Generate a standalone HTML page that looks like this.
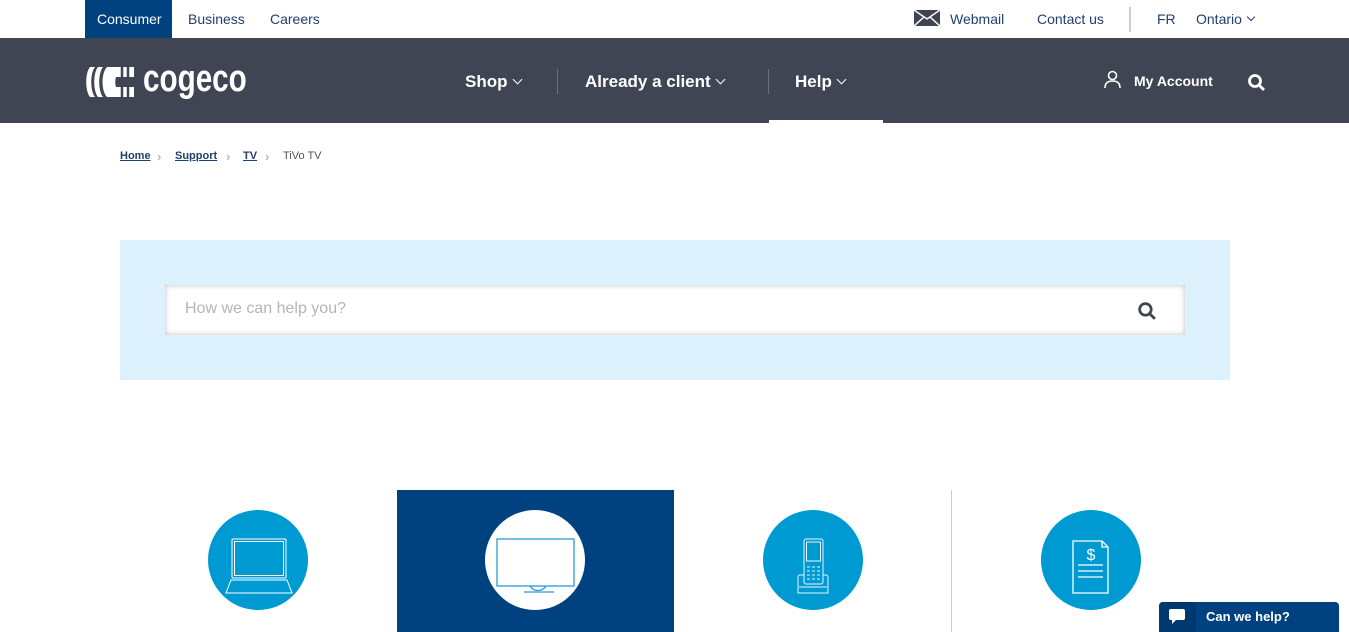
<!DOCTYPE html>
<html><head><meta charset="utf-8">
<style>
*{margin:0;padding:0;box-sizing:border-box}
body{width:1349px;height:632px;overflow:hidden;background:#fff;font-family:"Liberation Sans",sans-serif;position:relative}
.a{position:absolute}
.top{height:38px;font-size:14px;color:#1f3f6e}
.nav{top:38px;left:0;width:1349px;height:85px;background:#404553}
.nl{color:#fff;font-weight:bold;font-size:17px;top:72px}
.chev{display:inline-block;width:7px;height:7px;border-right:1.5px solid currentColor;border-bottom:1.5px solid currentColor;transform:rotate(45deg);margin-left:6px;position:relative;top:-4px}
.circ{width:100px;height:100px;border-radius:50%;background:#009ad3;top:510px}
.bc{top:150px;font-size:11px}
.bc a{color:#1f3f6e;font-weight:bold;text-decoration:underline}
.sep{top:149px;font-size:13px;color:#bbb;font-weight:bold}
</style></head><body>
<div class="a" style="left:85px;top:0;width:87px;height:38px;background:#00427f"></div>
<div class="a top" style="left:97px;top:11px;color:#fff">Consumer</div>
<div class="a top" style="left:188px;top:11px">Business</div>
<div class="a top" style="left:270px;top:11px">Careers</div>
<svg class="a" style="left:914px;top:10px" width="26" height="16" viewBox="0 0 26 16"><rect width="26" height="16" fill="#404553"/><path d="M0 0L13 9L26 0M0 16L10 7M26 16L16 7" stroke="#fff" stroke-width="1.5" fill="none"/></svg>
<div class="a top" style="left:950px;top:11px">Webmail</div>
<div class="a top" style="left:1037px;top:11px">Contact us</div>
<div class="a" style="left:1129px;top:7px;width:2px;height:25px;background:#ccc"></div>
<div class="a top" style="left:1157px;top:11px">FR</div>
<div class="a top" style="left:1196px;top:11px">Ontario<span class="chev" style="width:6px;height:6px;border-width:1.3px"></span></div>
<div class="a nav"></div>
<svg class="a" style="left:86px;top:67px" width="48" height="30" viewBox="0 0 48 30"><g fill="#fff"><path d="M4 0h5C4 6 4 24 9 30H4C-1 24-1 6 4 0z"/><path d="M12 0h5C12 6 12 24 17 30H12C7 24 7 6 12 0z"/><path d="M21 0h27v10H30c-1 3-1 7 0 10h18v10H21C15 24 15 6 21 0z"/></g><path d="M36 0v10M42 0v10M36 20v10M42 20v10" stroke="#404553" stroke-width="2.5"/></svg>
<div class="a" style="left:143px;top:58px;color:#fff;font-weight:bold;font-size:38px;letter-spacing:0px;transform:scaleX(0.78);transform-origin:left">cogeco</div>
<div class="a nl" style="left:465px">Shop<span class="chev"></span></div>
<div class="a" style="left:557px;top:69px;width:1px;height:25px;background:#6b7080"></div>
<div class="a nl" style="left:585px">Already a client<span class="chev"></span></div>
<div class="a" style="left:768px;top:69px;width:1px;height:25px;background:#6b7080"></div>
<div class="a nl" style="left:795px">Help<span class="chev"></span></div>
<div class="a" style="left:769px;top:120px;width:114px;height:3px;background:#fff"></div>
<svg class="a" style="left:1103px;top:70px" width="19" height="19" viewBox="0 0 19 19" fill="none" stroke="#fff" stroke-width="1.6"><circle cx="9.5" cy="5.5" r="4"/><path d="M2 18c0-5 3-7 7.5-7s7.5 2 7.5 7"/></svg>
<div class="a" style="left:1134px;top:73px;color:#fff;font-weight:bold;font-size:14px">My Account</div>
<svg class="a" style="left:1247px;top:73px" width="19" height="19" viewBox="0 0 19 19" fill="none" stroke="#fff" stroke-width="2.8"><circle cx="8" cy="8" r="5.5"/><path d="M12 12l5 5"/></svg>
<div class="a bc" style="left:120px"><a>Home</a></div>
<div class="a sep" style="left:157px">›</div>
<div class="a bc" style="left:175px"><a>Support</a></div>
<div class="a sep" style="left:226px">›</div>
<div class="a bc" style="left:243px"><a>TV</a></div>
<div class="a sep" style="left:265px">›</div>
<div class="a bc" style="left:283px;color:#555">TiVo TV</div>
<div class="a" style="left:120px;top:240px;width:1110px;height:140px;background:#dcf1fc"></div>
<div class="a" style="left:165px;top:285px;width:1020px;height:50px;background:#fff;box-shadow:inset 0 0 6px rgba(0,0,0,0.25)"></div>
<div class="a" style="left:185px;top:300px;font-size:16px;color:#b5b5b5">How we can help you?</div>
<svg class="a" style="left:1137px;top:301px" width="20" height="20" viewBox="0 0 19 19" fill="none" stroke="#404553" stroke-width="2.6"><circle cx="8" cy="8" r="5.5"/><path d="M12 12l5 5"/></svg>
<div class="a" style="left:397px;top:490px;width:277px;height:142px;background:#00427f"></div>
<div class="a" style="left:951px;top:490px;width:1px;height:142px;background:#ccc"></div>
<div class="a circ" style="left:208px"></div>
<svg class="a" style="left:225px;top:538px" width="68" height="56" viewBox="0 0 68 56" fill="none" stroke="#fff" stroke-width="1"><rect x="7" y="1" width="54" height="39" rx="1"/><rect x="9.5" y="3.5" width="49" height="34"/><path d="M6 42h56l5 13H1z"/></svg>
<div class="a circ" style="left:485px;background:#fff"></div>
<svg class="a" style="left:496px;top:538px" width="80" height="58" viewBox="0 0 80 58" fill="none" stroke="#2a9bd6" stroke-width="1.3"><rect x="1" y="1" width="77" height="47"/><path d="M34 48c4 6 12 6 16 0"/><path d="M28 54h30"/></svg>
<div class="a circ" style="left:763px"></div>
<svg class="a" style="left:791px;top:538px" width="44" height="56" viewBox="0 0 44 56" fill="none" stroke="#e6f4fb" stroke-width="1"><rect x="13" y="1" width="19" height="45" rx="2"/><rect x="15.5" y="4" width="14" height="19"/><path d="M16 29h3M21 29h3M26 29h3M16 33h3M21 33h3M26 33h3M16 37h3M21 37h3M26 37h3M16 41h3M21 41h3M26 41h3"/><path d="M13 37H9q-2 0-2 3v15h30V40q0-3-2-3h-3M8 49h28"/></svg>
<div class="a circ" style="left:1041px"></div>
<svg class="a" style="left:1068px;top:538px" width="48" height="62" viewBox="0 0 48 62" fill="none" stroke="#fff" stroke-width="1.3"><path d="M5 3h29l6 6v46H5z M34 3v6h6"/><path d="M10 27h25M10 33h25M10 39h25"/><text x="23" y="22" font-family="Liberation Sans" font-size="16" fill="#fff" stroke="none" text-anchor="middle">$</text></svg>
<div class="a" style="left:1159px;top:602px;width:180px;height:30px;background:#00427f;border-radius:4px 4px 0 0"></div>
<div class="a" style="left:1159px;top:602px;width:37px;height:30px;background:#003870;border-radius:4px 0 0 0"></div>
<svg class="a" style="left:1168px;top:608px" width="18" height="18" viewBox="0 0 18 18"><path d="M3 1h12q2 0 2 2v7q0 2-2 2H8l-4 4v-4H3q-2 0-2-2V3q0-2 2-2z" fill="#fff"/></svg>
<div class="a" style="left:1206px;top:609px;color:#fff;font-weight:bold;font-size:13px">Can we help?</div>
</body></html>
